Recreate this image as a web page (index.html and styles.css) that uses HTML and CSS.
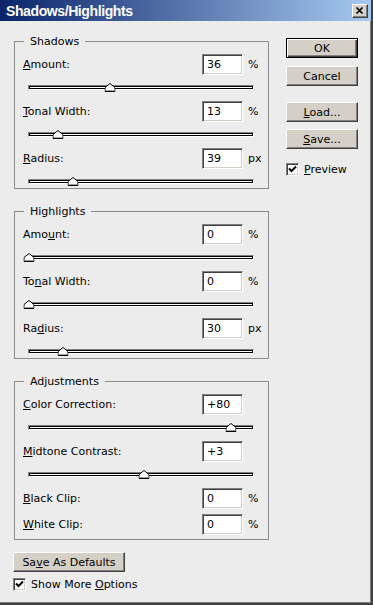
FILE: index.html
```html
<!DOCTYPE html>
<html>

<head>
    <link rel="stylesheet" href="styles.css">
</head>

<body>
    <div class="window">
        <div class="titlebar">
            <span class="title">Shadows/Highlights</span>
            <span class="close">
                <svg width="14" height="12" viewBox="0 0 14 12"><path d="M3.5 2.5 L9.5 8.5 M9.5 2.5 L3.5 8.5" stroke="#000" stroke-width="1.7" fill="none"/></svg>
            </span>
        </div>
        <div class="client">
            <div class="left">
                <fieldset class="group">
                    <legend>Shadows</legend>
                    <div class="control">
                        <div class="row"><span class="label"><u>A</u>mount:</span><span class="field">36</span><span class="unit">%</span></div>
                        <div class="track"><svg class="thumb" style="left:36%" width="11" height="9" viewBox="0 0 11 9"><polygon points="0.5,8.5 0.5,4.5 5.5,0.5 10.5,4.5 10.5,8.5" fill="#fff" stroke="#000"/><path d="M1.5 7.5 H9.5" stroke="#a0a0a0"/></svg></div>
                    </div>
                    <div class="control">
                        <div class="row"><span class="label"><u>T</u>onal Width:</span><span class="field">13</span><span class="unit">%</span></div>
                        <div class="track"><svg class="thumb" style="left:13%" width="11" height="9" viewBox="0 0 11 9"><polygon points="0.5,8.5 0.5,4.5 5.5,0.5 10.5,4.5 10.5,8.5" fill="#fff" stroke="#000"/><path d="M1.5 7.5 H9.5" stroke="#a0a0a0"/></svg></div>
                    </div>
                    <div class="control">
                        <div class="row"><span class="label"><u>R</u>adius:</span><span class="field">39</span><span class="unit">px</span></div>
                        <div class="track"><svg class="thumb" style="left:19.5%" width="11" height="9" viewBox="0 0 11 9"><polygon points="0.5,8.5 0.5,4.5 5.5,0.5 10.5,4.5 10.5,8.5" fill="#fff" stroke="#000"/><path d="M1.5 7.5 H9.5" stroke="#a0a0a0"/></svg></div>
                    </div>
                </fieldset>

                <fieldset class="group">
                    <legend>Highlights</legend>
                    <div class="control">
                        <div class="row"><span class="label">Amo<u>u</u>nt:</span><span class="field">0</span><span class="unit">%</span></div>
                        <div class="track"><svg class="thumb" style="left:0%" width="11" height="9" viewBox="0 0 11 9"><polygon points="0.5,8.5 0.5,4.5 5.5,0.5 10.5,4.5 10.5,8.5" fill="#fff" stroke="#000"/><path d="M1.5 7.5 H9.5" stroke="#a0a0a0"/></svg></div>
                    </div>
                    <div class="control">
                        <div class="row"><span class="label">To<u>n</u>al Width:</span><span class="field">0</span><span class="unit">%</span></div>
                        <div class="track"><svg class="thumb" style="left:0%" width="11" height="9" viewBox="0 0 11 9"><polygon points="0.5,8.5 0.5,4.5 5.5,0.5 10.5,4.5 10.5,8.5" fill="#fff" stroke="#000"/><path d="M1.5 7.5 H9.5" stroke="#a0a0a0"/></svg></div>
                    </div>
                    <div class="control">
                        <div class="row"><span class="label">Ra<u>d</u>ius:</span><span class="field">30</span><span class="unit">px</span></div>
                        <div class="track"><svg class="thumb" style="left:15%" width="11" height="9" viewBox="0 0 11 9"><polygon points="0.5,8.5 0.5,4.5 5.5,0.5 10.5,4.5 10.5,8.5" fill="#fff" stroke="#000"/><path d="M1.5 7.5 H9.5" stroke="#a0a0a0"/></svg></div>
                    </div>
                </fieldset>

                <fieldset class="group">
                    <legend>Adjustments</legend>
                    <div class="control">
                        <div class="row"><span class="label"><u>C</u>olor Correction:</span><span class="field">+80</span><span class="unit"></span></div>
                        <div class="track"><svg class="thumb" style="left:90%" width="11" height="9" viewBox="0 0 11 9"><polygon points="0.5,8.5 0.5,4.5 5.5,0.5 10.5,4.5 10.5,8.5" fill="#fff" stroke="#000"/><path d="M1.5 7.5 H9.5" stroke="#a0a0a0"/></svg></div>
                    </div>
                    <div class="control">
                        <div class="row"><span class="label"><u>M</u>idtone Contrast:</span><span class="field">+3</span><span class="unit"></span></div>
                        <div class="track"><svg class="thumb" style="left:51.5%" width="11" height="9" viewBox="0 0 11 9"><polygon points="0.5,8.5 0.5,4.5 5.5,0.5 10.5,4.5 10.5,8.5" fill="#fff" stroke="#000"/><path d="M1.5 7.5 H9.5" stroke="#a0a0a0"/></svg></div>
                    </div>
                    <div class="control">
                        <div class="row"><span class="label"><u>B</u>lack Clip:</span><span class="field">0</span><span class="unit">%</span></div>
                    </div>
                    <div class="control tight">
                        <div class="row"><span class="label"><u>W</u>hite Clip:</span><span class="field">0</span><span class="unit">%</span></div>
                    </div>
                </fieldset>

                <button type="button" class="btn wide">Sa<u>v</u>e As Defaults</button>
                <div class="check">
                    <span class="box"><svg width="9" height="9" viewBox="0 0 9 9"><path d="M1 3.5 L3.5 6 L8 1.5" stroke="#000" stroke-width="2" fill="none"/></svg></span>
                    <span>Show More <u>O</u>ptions</span>
                </div>
            </div>

            <div class="right">
                <button type="button" class="btn default">OK</button>
                <button type="button" class="btn cancel">Cancel</button>
                <button type="button" class="btn load"><u>L</u>oad...</button>
                <button type="button" class="btn save"><u>S</u>ave...</button>
                <div class="check preview">
                    <span class="box"><svg width="9" height="9" viewBox="0 0 9 9"><path d="M1 3.5 L3.5 6 L8 1.5" stroke="#000" stroke-width="2" fill="none"/></svg></span>
                    <span><u>P</u>review</span>
                </div>
            </div>
        </div>
    </div>
</body>

</html>
```

FILE: styles.css
```css
body {
    margin: 0;
    font-family: "DejaVu Sans", sans-serif;
    font-size: 11px;
    color: #000;
}

.window {
    width: 373px;
    height: 605px;
    box-sizing: border-box;
    background-color: #ececec;
    border-right: 2px solid #404040;
    border-bottom: 2px solid #404040;
    box-shadow: inset -1px -1px 0 #808080;
    display: flex;
    flex-direction: column;
}

/* title bar */
.titlebar {
    height: 21px;
    flex: none;
    display: flex;
    align-items: center;
    padding-left: 6px;
    background: linear-gradient(to right, #0a246a, #a6caf0);
}

.title {
    font-family: "Liberation Sans", sans-serif;
    font-weight: bold;
    font-size: 14px;
    letter-spacing: -0.4px;
    color: white;
}

.close {
    margin-left: auto;
    margin-right: 3px;
    width: 16px;
    height: 14px;
    box-sizing: border-box;
    background-color: #d4d0c8;
    border: 1px solid;
    border-color: #fff #404040 #404040 #fff;
    box-shadow: inset -1px -1px 0 #808080;
    display: flex;
}

.client {
    display: flex;
    padding-left: 14px;
}

.left {
    width: 255px;
    padding-top: 14px;
}

.right {
    width: 72px;
    margin-left: 17px;
    display: flex;
    flex-direction: column;
}

/* group boxes */
.group {
    margin: 0 0 16px 0;
    padding: 6px 0 4px 8px;
    border: 1px solid #8c8c8c;
    min-width: 0;
}

.group:last-of-type {
    margin-bottom: 0;
}

.group legend {
    margin-left: 1px;
    padding: 0 6px;
    line-height: 13px;
}

.control + .control {
    margin-top: 11px;
}

.control.tight {
    margin-top: 5px;
}

.row {
    display: flex;
    align-items: center;
    height: 21px;
}

.label {
    flex: 1;
}

.field {
    width: 41px;
    height: 21px;
    box-sizing: border-box;
    background-color: #fff;
    border: 1px solid;
    border-color: #808080 #fff #fff #808080;
    box-shadow: inset 1px 1px 0 #404040, inset -1px -1px 0 #d4d0c8;
    padding-left: 4px;
    line-height: 19px;
}

.unit {
    width: 25px;
    box-sizing: border-box;
    padding-left: 5px;
}

/* slider */
.track {
    position: relative;
    width: 226px;
    height: 5px;
    box-sizing: border-box;
    margin: 10px 0 0 5px;
    background-color: #fff;
    border: 1px solid;
    border-color: #808080 #fff #fff #808080;
    box-shadow: inset 0 0 0 1px #000;
}

.thumb {
    position: absolute;
    top: -3px;
    transform: translateX(-50%);
}

/* buttons */
.btn {
    display: block;
    width: 72px;
    height: 20px;
    box-sizing: border-box;
    padding: 0;
    font-family: "DejaVu Sans", sans-serif;
    font-size: 11px;
    color: #000;
    background-color: #d4d0c8;
    border: 1px solid;
    border-color: #fff #404040 #404040 #fff;
    box-shadow: inset -1px -1px 0 #808080;
    text-align: center;
}

.btn.default {
    margin-top: 17px;
    border-color: #000;
    box-shadow: inset 1px 1px 0 #fff, inset -1px -1px 0 #404040, inset -2px -2px 0 #808080;
}

.btn.cancel {
    margin-top: 8px;
}

.btn.load {
    margin-top: 16px;
}

.btn.save {
    margin-top: 7px;
}

.btn.wide {
    width: 112px;
    margin-top: 12px;
    margin-left: -1px;
}

/* checkboxes */
.check {
    display: flex;
    align-items: center;
    gap: 5px;
    margin-top: 6px;
    margin-left: -1px;
}

.check.preview {
    margin-top: 14px;
    margin-left: 0;
}

.box {
    width: 13px;
    height: 13px;
    box-sizing: border-box;
    background-color: #fff;
    border: 1px solid;
    border-color: #808080 #fff #fff #808080;
    box-shadow: inset 1px 1px 0 #404040, inset -1px -1px 0 #d4d0c8;
    display: flex;
    align-items: center;
    justify-content: center;
}
```
